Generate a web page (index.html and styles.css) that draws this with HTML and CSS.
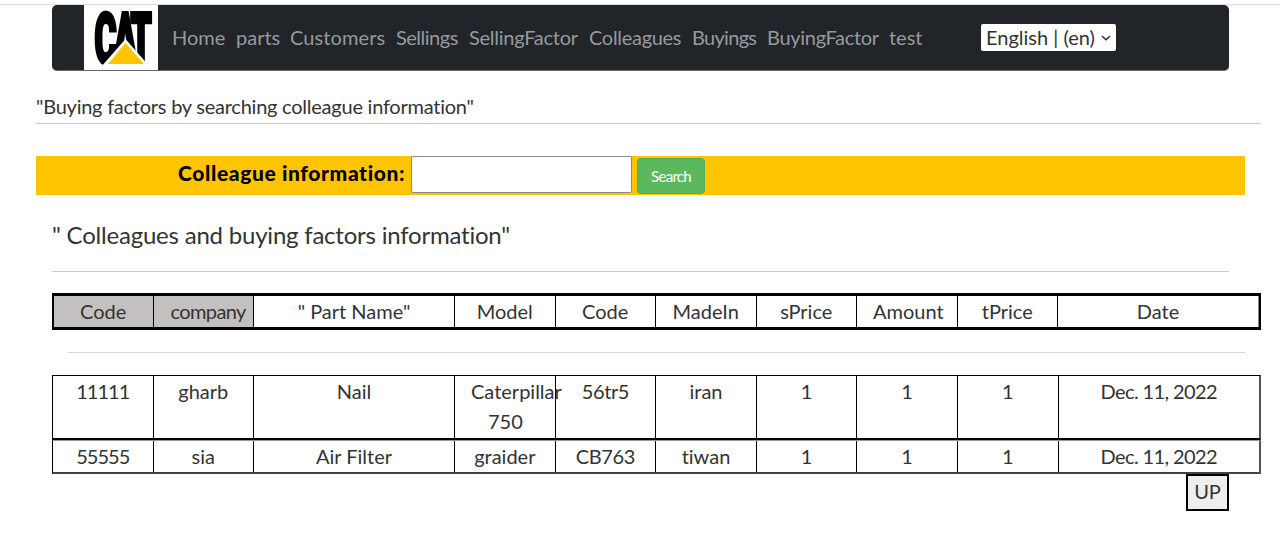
FILE: index.html
```html
<!DOCTYPE html>
<html lang="en">
<head>
<meta charset="utf-8">
<title>Buying factors</title>
<link rel="stylesheet" href="styles.css">
</head>
<body>
<div class="topline"></div>
<nav class="navbar">
  <a class="brand" href="#">
    <svg width="74" height="65" viewBox="0 0 74 65" role="img" aria-label="CAT">
      <text class="logo-text" transform="translate(10.5 58) scale(.475 1)" dx="0 -6 -9">CAT</text>
      <path d="M17 62 41.500 34 66 62z" fill="#fff"/>
      <path d="M24 59 41.5 38 60 59z" fill="#ffc500"/>
    </svg>
  </a>
  <div class="links">
    <a class="n1">Home</a><a class="n2">parts</a><a class="n3">Customers</a><a class="n4">Sellings</a><a class="n5">SellingFactor</a><a class="n6">Colleagues</a><a class="n7">Buyings</a><a class="n8">BuyingFactor</a><a class="n9">test</a>
  </div>
  <div class="language"><span>English | (en)</span>
    <svg width="10" height="6" viewBox="0 0 10 6"><path d="M1 1l4 3.8L9 1" fill="none" stroke="#222" stroke-width="1.3"/></svg>
  </div>
</nav>
<h1 class="page-title"><span>"Buying factors by searching colleague information"</span></h1>
<form class="search">
  <label for="q">Colleague information:</label>
  <input id="q" type="text">
  <button type="button">Search</button>
</form>
<h2 class="section-title"><span>" Colleagues and buying factors information"</span></h2>
<div class="row head">
  <div class="shade">Code</div><div class="shade spill company">company</div><div>" Part Name"</div><div>Model</div><div>Code</div><div>MadeIn</div><div>sPrice</div><div class="spill amount">Amount</div><div>tPrice</div><div>Date</div>
</div>
<div class="divider"></div>
<div class="row first">
  <div class="ones">11111</div><div>gharb</div><div>Nail</div><div class="spill model">Caterpillar<br><span>750</span></div><div class="tight">56tr5</div><div>iran</div><div>1</div><div>1</div><div>1</div><div class="date">Dec. 11, 2022</div>
</div>
<div class="row second">
  <div class="code">55555</div><div>sia</div><div>Air Filter</div><div>graider</div><div class="tight">CB763</div><div>tiwan</div><div>1</div><div>1</div><div>1</div><div class="date">Dec. 11, 2022</div>
</div>
<div class="up-line"><a class="up">UP</a></div>
</body>
</html>
```
FILE: styles.css
```css
* { box-sizing: border-box; }
body {
  margin: 0;
  height: 545px;
  overflow: hidden;
  background: #fff;
  color: #333;
  font: 20px/30px "Gill Sans", "Gill Sans MT", Lato, sans-serif;
  font-variant-ligatures: none;
}
.topline { height: 1px; margin-top: 4px; background: #ddd; }
.navbar {
  display: flex;
  align-items: center;
  width: 1177px;
  height: 66px;
  margin-left: 52px;
  padding-left: 32px;
  background: #212529;
  border-bottom: 1px solid #65676a;
  border-radius: 5px;
}
.brand { width: 74px; height: 65px; background: #fff; }
.brand svg { display: block; overflow: visible; }
.logo-text {
  font: 900 71px Roboto, sans-serif;
  stroke: #000;
  stroke-width: 4px;
}
.links { display: flex; width: 823px; padding: 0 0 2px 14px; color: #97999b; }
.links a { white-space: nowrap; }
.n1 { width: 64px; }
.n2 { width: 54px; }
.n3 { width: 106px; letter-spacing: 0.1px; }
.n4 { width: 73px; letter-spacing: -0.5px; }
.n5 { width: 120px; letter-spacing: -0.25px; }
.n6 { width: 103px; letter-spacing: -0.3px; }
.n7 { width: 75px; letter-spacing: -0.7px; }
.n8 { width: 122px; letter-spacing: -0.3px; }
.language {
  display: flex;
  align-items: center;
  justify-content: space-between;
  width: 135px;
  height: 27px;
  padding: 0 5px 0 5px;
  background: #fff;
  border-radius: 2px;
}
.language span { padding-bottom: 2px; }
.page-title {
  width: 1225px;
  height: 29px;
  margin: 24px 0 0 36px;
  line-height: 22px;
  border-bottom: 1px solid #c8c8c8;
  font-size: 20px;
  font-weight: 400;
  letter-spacing: -0.24px;
}
.search {
  display: flex;
  width: 1209px;
  height: 39px;
  margin: 32px 0 0 36px;
  padding-left: 142px;
  background: #ffc500;
}
.search label {
  width: 233px;
  padding-top: 2px;
  color: #000;
  font-size: 21px;
  font-weight: 900;
  letter-spacing: 0.62px;
  white-space: nowrap;
}
.search input {
  width: 221px;
  height: 37px;
  border: 1px solid #8a8a8a;
  border-radius: 2px;
}
.search button {
  width: 68px;
  height: 36px;
  margin: 2px 0 0 5px;
  padding: 0;
  border: 1px solid #4fae58;
  border-radius: 4px;
  background: #5cb85c;
  color: #fff;
  font: 15px Lato, sans-serif;
  letter-spacing: -0.7px;
}
.section-title {
  width: 1177px;
  height: 53px;
  margin: 24px 0 0 52px;
  border-bottom: 1px solid #ccc;
  font-size: 24px;
  font-weight: 400;
  line-height: 32px;
  letter-spacing: -0.21px;
}
.row {
  display: grid;
  grid-template-columns: 99.5px 100.5px 201px repeat(6, 100.6px) 1fr;
  width: 1209px;
  margin-left: 52px;
  border: 1px solid #000;
  border-right: 2px solid #555;
  text-align: center;
}
.row > div + div { border-left: 1px solid #000; }
.head {
  grid-template-columns: 98.5px 100.5px 201px repeat(6, 100.5px) 1fr;
  height: 37px;
  margin-top: 21px;
  border: 2px solid #000;
  border-width: 3px 2px;
  line-height: 31px;
}
.head > div:last-child { border-right: 1px solid #888; }
.shade { background: #c4c0bf; }
.row .spill { padding-left: 16px; text-align: left; }
.row .company { padding-left: 17px; letter-spacing: -0.6px; }
.divider { width: 1177px; height: 1px; margin: 22px 0 0 68px; background: #d6d6d6; }
.first { height: 65px; margin-top: 22px; border-bottom: 2px solid #000; }
.second { height: 34px; border-top: 1px solid #999; border-bottom: 2px solid #444; line-height: 30px; }
.model span { padding-left: 17px; }
.code { letter-spacing: -1px; }
.ones { letter-spacing: -1px; }
.tight { letter-spacing: -0.4px; }
.date { letter-spacing: -0.6px; }
.up-line { display: flex; width: 1177px; margin-left: 52px; justify-content: flex-end; }
.up { width: 43px; height: 37px; border: 2px solid #000; background: #eee; text-align: center; line-height: 31px; }
```
